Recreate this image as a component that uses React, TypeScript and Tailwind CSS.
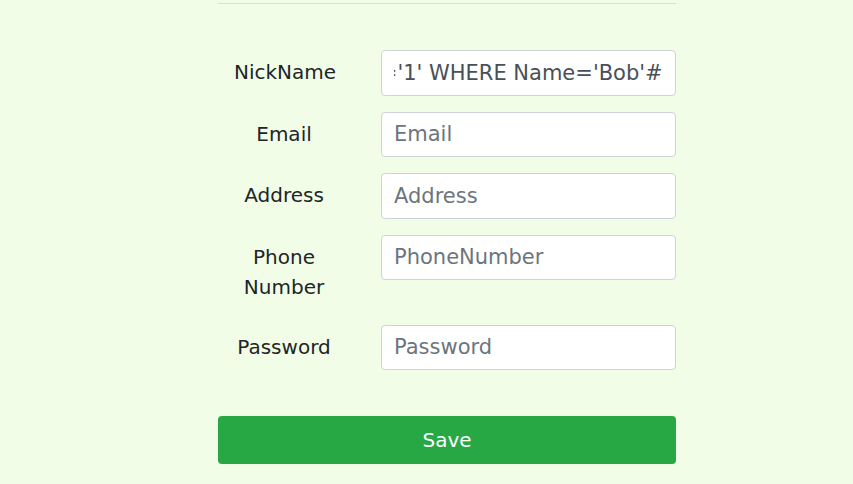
import { useEffect, useRef } from 'react';

type Field = {
  label: string;
  placeholder: string;
  type?: string;
};

const fields: Field[] = [
  { label: 'Email', placeholder: 'Email' },
  { label: 'Address', placeholder: 'Address' },
  { label: 'Phone Number', placeholder: 'PhoneNumber' },
  { label: 'Password', placeholder: 'Password', type: 'password' },
];

const inputClass =
  'h-[45.5px] w-full rounded-[4px] border border-[#ced4da] bg-white px-3 text-[21px] text-[#495057] placeholder:text-[#6c757d] outline-none';

function FormRow({ label, children }: { label: string; children: React.ReactNode }) {
  return (
    <div className="flex items-start gap-[31px]">
      <label className="w-[132px] shrink-0 px-4 py-[7px] text-center text-[20px] leading-[30px] text-[#212529]">
        {label}
      </label>
      <div className="flex-1">{children}</div>
    </div>
  );
}

export default function App() {
  const nickRef = useRef<HTMLInputElement>(null);

  useEffect(() => {
    const el = nickRef.current;
    if (el) el.scrollLeft = el.scrollWidth;
  }, []);

  return (
    <div
      className="min-h-[484px] w-full bg-[#f1fde6] pl-[41px]"
      style={{ fontFamily: '"DejaVu Sans", sans-serif' }}
    >
      <div className="mx-auto w-[458px] pt-[3px]">
        <hr className="border-t border-[#dcdfd6]" />
        <form className="mt-[46px] flex flex-col gap-4" onSubmit={(e) => e.preventDefault()}>
          <FormRow label="NickName">
            <input
              ref={nickRef}
              className={inputClass}
              defaultValue="Bob', Password='1' WHERE Name='Bob'#"
            />
          </FormRow>
          {fields.map((f) => (
            <FormRow key={f.label} label={f.label}>
              <input className={inputClass} placeholder={f.placeholder} type={f.type ?? 'text'} />
            </FormRow>
          ))}
          <button
            type="submit"
            className="mt-[30px] h-[48px] w-full rounded-[4px] bg-[#28a745] text-[20px] text-white"
          >
            Save
          </button>
        </form>
      </div>
    </div>
  );
}
